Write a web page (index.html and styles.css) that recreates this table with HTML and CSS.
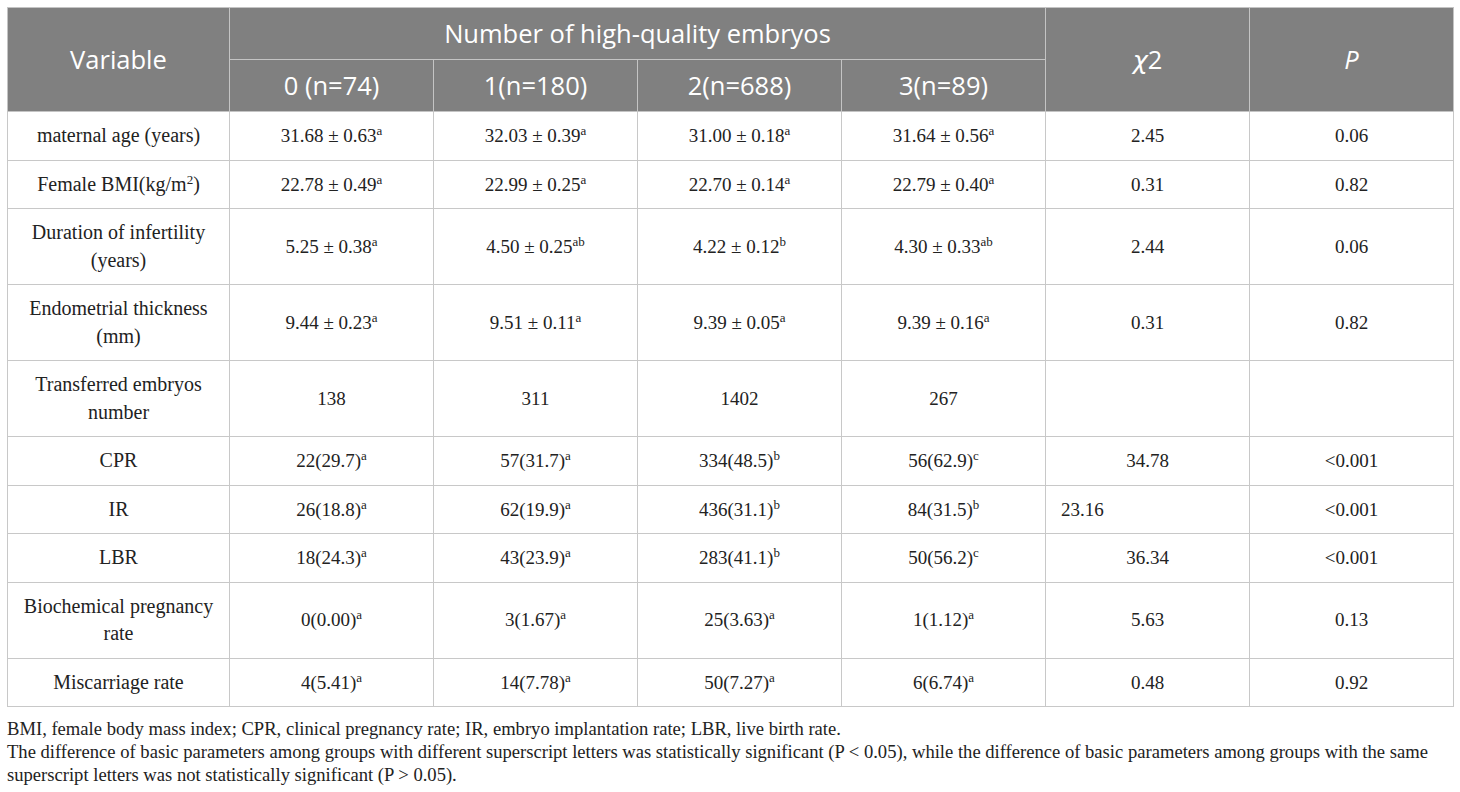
FILE: index.html
```html
<!DOCTYPE html>
<html>
<head>
<meta charset="utf-8">
<link rel="stylesheet" href="styles.css">
</head>
<body>
<div class="wrap">
<table class="data">
  <colgroup>
    <col class="c-var"><col class="c-num"><col class="c-num"><col class="c-num"><col class="c-num"><col class="c-num"><col class="c-num">
  </colgroup>
  <thead>
    <tr>
      <th rowspan="2">Variable</th>
      <th colspan="4">Number of high-quality embryos</th>
      <th rowspan="2"><span class="chi">χ</span>2</th>
      <th rowspan="2"><i>P</i></th>
    </tr>
    <tr>
      <th>0 (n=74)</th>
      <th>1(n=180)</th>
      <th>2(n=688)</th>
      <th>3(n=89)</th>
    </tr>
  </thead>
  <tbody>
    <tr><td>maternal age (years)</td><td>31.68 ± 0.63<sup>a</sup></td><td>32.03 ± 0.39<sup>a</sup></td><td>31.00 ± 0.18<sup>a</sup></td><td>31.64 ± 0.56<sup>a</sup></td><td>2.45</td><td>0.06</td></tr>
    <tr><td>Female BMI(kg/m<sup>2</sup>)</td><td>22.78 ± 0.49<sup>a</sup></td><td>22.99 ± 0.25<sup>a</sup></td><td>22.70 ± 0.14<sup>a</sup></td><td>22.79 ± 0.40<sup>a</sup></td><td>0.31</td><td>0.82</td></tr>
    <tr><td>Duration of infertility<br>(years)</td><td>5.25 ± 0.38<sup>a</sup></td><td>4.50 ± 0.25<sup>ab</sup></td><td>4.22 ± 0.12<sup>b</sup></td><td>4.30 ± 0.33<sup>ab</sup></td><td>2.44</td><td>0.06</td></tr>
    <tr><td>Endometrial thickness<br>(mm)</td><td>9.44 ± 0.23<sup>a</sup></td><td>9.51 ± 0.11<sup>a</sup></td><td>9.39 ± 0.05<sup>a</sup></td><td>9.39 ± 0.16<sup>a</sup></td><td>0.31</td><td>0.82</td></tr>
    <tr><td>Transferred embryos<br>number</td><td>138</td><td>311</td><td>1402</td><td>267</td><td></td><td></td></tr>
    <tr><td>CPR</td><td>22(29.7)<sup>a</sup></td><td>57(31.7)<sup>a</sup></td><td>334(48.5)<sup>b</sup></td><td>56(62.9)<sup>c</sup></td><td>34.78</td><td>&lt;0.001</td></tr>
    <tr><td>IR</td><td>26(18.8)<sup>a</sup></td><td>62(19.9)<sup>a</sup></td><td>436(31.1)<sup>b</sup></td><td>84(31.5)<sup>b</sup></td><td class="left">23.16</td><td>&lt;0.001</td></tr>
    <tr><td>LBR</td><td>18(24.3)<sup>a</sup></td><td>43(23.9)<sup>a</sup></td><td>283(41.1)<sup>b</sup></td><td>50(56.2)<sup>c</sup></td><td>36.34</td><td>&lt;0.001</td></tr>
    <tr><td>Biochemical pregnancy<br>rate</td><td>0(0.00)<sup>a</sup></td><td>3(1.67)<sup>a</sup></td><td>25(3.63)<sup>a</sup></td><td>1(1.12)<sup>a</sup></td><td>5.63</td><td>0.13</td></tr>
    <tr><td>Miscarriage rate</td><td>4(5.41)<sup>a</sup></td><td>14(7.78)<sup>a</sup></td><td>50(7.27)<sup>a</sup></td><td>6(6.74)<sup>a</sup></td><td>0.48</td><td>0.92</td></tr>
  </tbody>
</table>
<div class="notes">
  <p>BMI, female body mass index; CPR, clinical pregnancy rate; IR, embryo implantation rate; LBR, live birth rate.</p>
  <p>The difference of basic parameters among groups with different superscript letters was statistically significant (P &lt; 0.05), while the difference of basic parameters among groups with the same superscript letters was not statistically significant (P &gt; 0.05).</p>
</div>
</div>
</body>
</html>
```
FILE: styles.css
```css
html, body {
  margin: 0;
  padding: 0;
  background: #ffffff;
}
.wrap {
  padding: 7px 7px 0 7px;
  width: 1446px;
}
.data {
  width: 1446px;
  border-collapse: collapse;
  table-layout: fixed;
}
.c-var { width: 222px; }
.c-num { width: 204px; }
.data th {
  background: #808080;
  color: #ffffff;
  font-family: "Open Sans", "DejaVu Sans", sans-serif;
  font-weight: 400;
  font-size: 25.5px;
  line-height: 31px;
  padding: 10px 4px;
  border: 1px solid #c4c4c4;
  text-align: center;
  vertical-align: middle;
}
.data th .chi {
  font-family: "DejaVu Sans", sans-serif;
  font-style: italic;
}
.data td {
  font-family: "Liberation Serif", "Times New Roman", serif;
  font-size: 19px;
  line-height: 27.5px;
  color: #222222;
  padding: 10px 4px;
  border: 1px solid #c8c8c8;
  text-align: center;
  vertical-align: middle;
}
.data td:first-child {
  font-size: 20px;
}
.data td.left {
  text-align: left;
  padding-left: 15px;
}
.data sup {
  font-size: 13px;
  line-height: 0;
  vertical-align: 7px;
}
.notes {
  margin-top: 10px;
  font-family: "Liberation Serif", "Times New Roman", serif;
  font-size: 18.6px;
  line-height: 23px;
  color: #222222;
}
.notes p {
  margin: 0;
}
```
